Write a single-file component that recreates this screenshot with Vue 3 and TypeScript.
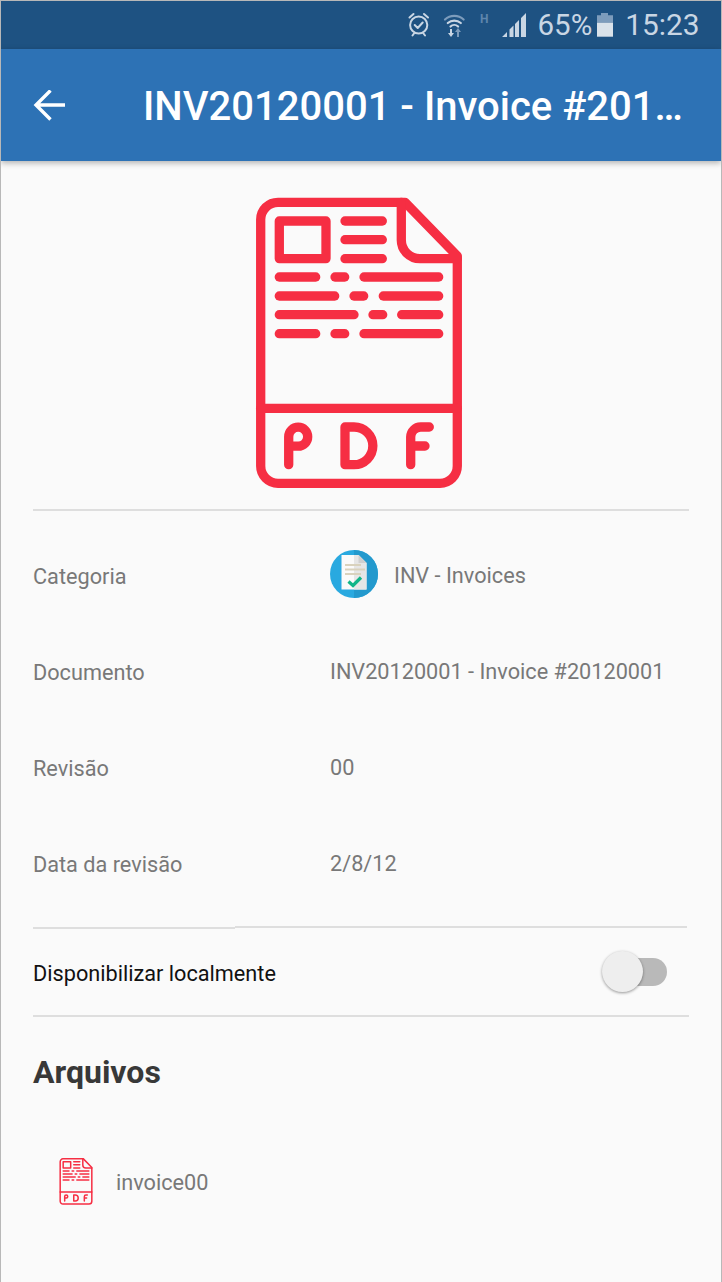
<template>
  <div class="screen">
    <svg class="defs" width="0" height="0" aria-hidden="true">
      <symbol id="pdf-doc" viewBox="255 197 208 292">
        <g fill="none" stroke="#f62e43" stroke-width="9.3" stroke-linecap="round" stroke-linejoin="round">
          <path d="M405 202.3H278a17.3 17.3 0 0 0-17.3 17.3V466a17.3 17.3 0 0 0 17.3 17.3H440a17.3 17.3 0 0 0 17.3-17.3V256Z" />
          <path d="M401.3 202.3V240a18.7 18.7 0 0 0 18.7 18.7H457.3" />
          <path d="M260.7 408.3H457.3" />
          <rect x="279.3" y="221" width="46.7" height="37.6" />
          <path v-for="(d, i) in docLines" :key="i" :d="d" />
          <path d="M288.7 464.7V436.7a9.5 9.5 0 1 1 9.5 9.5H288.7" />
          <path d="M345 427V464.7H354a18.85 18.85 0 0 0 0-37.7Z" />
          <path d="M410.7 464.7V437a10 10 0 0 1 10-10H429.3M410.7 446H425" />
        </g>
      </symbol>
    </svg>

    <header class="status-bar">
      <svg class="st-alarm" width="24" height="26" viewBox="407 12 24 26">
        <g fill="none" stroke="#c9d6e4" stroke-width="2" stroke-linecap="round" stroke-linejoin="round">
          <circle cx="418.7" cy="25" r="8.6" />
          <path d="M414.7 25l3 3 5-5.500M409.500 17.500l4-3.500M428 17.500l-4-3.500M412.500 35.500l1.500-2M425 35.500l-1.500-2" />
        </g>
      </svg>
      <svg class="st-wifi" width="22" height="26" viewBox="442 12 22 26">
        <g fill="none" stroke-linecap="round">
          <path d="M444 19.500a14 14 0 0 1 18.600 0" stroke="#7d9cbc" stroke-width="2.200" />
          <path d="M446.800 23a10 10 0 0 1 13 0" stroke="#c9d6e4" stroke-width="2.200" />
          <path d="M449.500 26.500a5.500 5.500 0 0 1 7.600 0" stroke="#c9d6e4" stroke-width="2.200" />
        </g>
        <path d="M449 29h2v4h2l-3 4-3-4h2Z" fill="#c9d6e4" />
        <path d="M456 37v-5h-2l3-4 3 4h-2v5Z" fill="#7d9cbc" />
      </svg>
      <span class="st-h">H</span>
      <svg class="st-signal" width="25" height="25" viewBox="503 13 25 25">
        <path d="M503 37l5-5v5ZM510.500 37v-7.500l4-4V37ZM516 37V24l4-4v17ZM522 37V18l5-5v24Z" fill="#c9d6e4" />
      </svg>
      <span class="st-text st-pct">65%</span>
      <svg class="st-batt" width="16" height="24" viewBox="599 13 16 24">
        <path d="M603 13h7v2.300h5v7.400h-16v-7.400h4Z" fill="#7d9cbc" />
        <rect x="599" y="22.700" width="16" height="14" fill="#d9e2ea" />
      </svg>
      <span class="st-text st-time">15:23</span>
    </header>

    <div class="app-bar">
      <svg class="back" width="34" height="32" viewBox="33 90 34 32">
        <path d="M65 105H36M50.500 90.500L36 105l14.500 14.500" fill="none" stroke="#fff" stroke-width="3.400" />
      </svg>
      <h1 class="title">INV20120001 - Invoice #20120001</h1>
    </div>

    <main class="content">
      <div class="hero">
        <svg class="hero-icon" width="208" height="292"><use href="#pdf-doc" /></svg>
      </div>
      <hr class="rule" />

      <div class="details">
        <div v-for="row in rows" :key="row.label" class="row">
          <span class="label">{{ row.label }}</span>
          <span class="value">
            <svg v-if="row.icon" class="cat-icon" width="48" height="48" viewBox="0 0 48 48">
              <circle cx="24" cy="24" r="24" fill="#29a9e0" />
              <path d="M24 0a24 24 0 0 1 0 48Z" fill="#2399cd" />
              <path d="M11.500 5h17l8 8v26.500h-25Z" fill="#fafafa" />
              <path d="M24 5h4.500l8 8v26.500H24Z" fill="#e6e6e6" />
              <path d="M28.500 5l8 8h-8Z" fill="#cfcfcf" />
              <path d="M15 15h16M15 19.500h20M15 24h16" stroke="#d9d2bd" stroke-width="2" />
              <path d="M18.500 31.500l4.500 4 8-8" fill="none" stroke="#11b588" stroke-width="3.200" />
            </svg>
            <span>{{ row.value }}</span>
          </span>
        </div>
      </div>

      <div class="split-rule">
        <i class="split-left"></i>
        <i class="split-right"></i>
      </div>
      <div class="offline">
        <span>Disponibilizar localmente</span>
        <div class="switch">
          <i class="track"></i>
          <i class="thumb"></i>
        </div>
      </div>
      <hr class="rule" />

      <h2 class="files-title">Arquivos</h2>
      <div class="file">
        <svg width="34" height="47"><use href="#pdf-doc" /></svg>
        <span>invoice00</span>
      </div>
    </main>
  </div>
</template>

<script setup lang="ts">
interface DetailRow {
  label: string
  value: string
  icon?: boolean
}

const rows: DetailRow[] = [
  { label: 'Categoria', value: 'INV - Invoices', icon: true },
  { label: 'Documento', value: 'INV20120001 - Invoice #20120001' },
  { label: 'Revisão', value: '00' },
  { label: 'Data da revisão', value: '2/8/12' },
]

const segments: [number, number, number][] = [
  [221, 345, 382.3],
  [239.7, 345, 382.3],
  [258.7, 345, 382.3],
  [277, 279.3, 315.7],
  [277, 335, 344.7],
  [277, 364, 438.7],
  [296, 279.3, 334.7],
  [296, 354, 363.7],
  [296, 383.3, 438.7],
  [314.7, 279.3, 354],
  [314.7, 373, 382.7],
  [314.7, 401.7, 438.7],
  [333.7, 279.3, 315.7],
  [333.7, 335, 344.7],
  [333.7, 364, 438.7],
]

const docLines = segments.map(([y, x1, x2]) => `M${x1} ${y}H${x2}`)
</script>

<style scoped>
.screen {
  width: 720px;
  height: 1281px;
  margin: 1px 1px 0;
  background: #fafafa;
  font-family: Roboto, "Liberation Sans", sans-serif;
  overflow: hidden;
}

.defs {
  position: absolute;
}

.status-bar {
  height: 48px;
  background: #1e5282;
  display: flex;
  align-items: flex-start;
  position: relative;
}

.st-alarm {
  margin: 11px 0 0 406px;
}

.st-wifi {
  margin: 11px 0 0 12px;
}

.st-h {
  margin: 11px 0 0 15px;
  font-size: 12px;
  font-weight: 700;
  color: #5f86ad;
  line-height: 14px;
}

.st-signal {
  margin: 12px 0 0 14px;
}

.st-text {
  font-size: 29.500px;
  line-height: 48px;
  color: #c9d6e4;
}

.st-pct {
  margin-left: 10px;
}

.st-batt {
  margin: 12px 0 0 5px;
}

.st-time {
  margin-left: 12px;
  font-size: 29.800px;
}

.app-bar {
  height: 112px;
  background: #2d72b5;
  display: flex;
  align-items: center;
  padding: 0 28px 0 32px;
  box-shadow: 0 2px 6px rgba(0, 0, 0, 0.3);
  position: relative;
}

.back {
  flex: none;
  margin-top: 1px;
}

.title {
  margin: 2px 0 0 76px;
  min-width: 0;
  flex: 1;
  font-size: 40px;
  font-weight: 500;
  color: #fff;
  white-space: nowrap;
  overflow: hidden;
  text-overflow: ellipsis;
}

.content {
  padding: 0 32px;
}

.hero {
  display: flex;
  justify-content: center;
  padding: 36px 0 20px;
  margin-right: 5px;
}

.rule {
  margin: 0;
  border: 0;
  height: 2px;
  background: #dedede;
}

.details {
  padding-top: 16px;
}

.row {
  height: 96px;
  display: grid;
  grid-template-columns: 297px 1fr;
  align-items: center;
  font-size: 21.700px;
  color: #787878;
  padding-top: 2px;
  box-sizing: border-box;
}

.value {
  display: flex;
  align-items: center;
  gap: 16px;
  margin-top: -2px;
}

.cat-icon {
  margin-top: -2px;
}

.split-rule {
  display: flex;
  height: 3px;
  margin-top: 15px;
  margin-right: 2px;
}

.split-left {
  width: 202px;
  height: 2px;
  margin-top: 1px;
  background: #dedede;
}

.split-right {
  flex: 1;
  height: 2px;
  background: #dedede;
}

.offline {
  height: 86px;
  display: flex;
  align-items: center;
  justify-content: space-between;
  font-size: 21.700px;
  color: #111;
  padding-top: 2px;
  box-sizing: border-box;
}

.switch {
  position: relative;
  width: 65px;
  height: 42px;
  margin: -2px 22px 0 0;
}

.track {
  position: absolute;
  right: 0;
  top: 7px;
  width: 56px;
  height: 28px;
  border-radius: 14px;
  background: #b9b9b9;
}

.thumb {
  position: absolute;
  left: 0;
  top: 0;
  width: 41px;
  height: 41px;
  border-radius: 50%;
  background: #eeeeee;
  box-shadow: 0 1px 3px rgba(0, 0, 0, 0.4);
}

.files-title {
  margin: 36px 0 0;
  font-size: 32px;
  font-weight: 700;
  line-height: 38px;
  color: #383838;
}

.file {
  display: flex;
  align-items: center;
  gap: 23px;
  margin: 67px 0 0 26px;
  font-size: 21.700px;
  color: #787878;
}

.file span {
  padding-top: 2px;
}
</style>

<style>
html,
body {
  background: #b8b8b8;
}
</style>
